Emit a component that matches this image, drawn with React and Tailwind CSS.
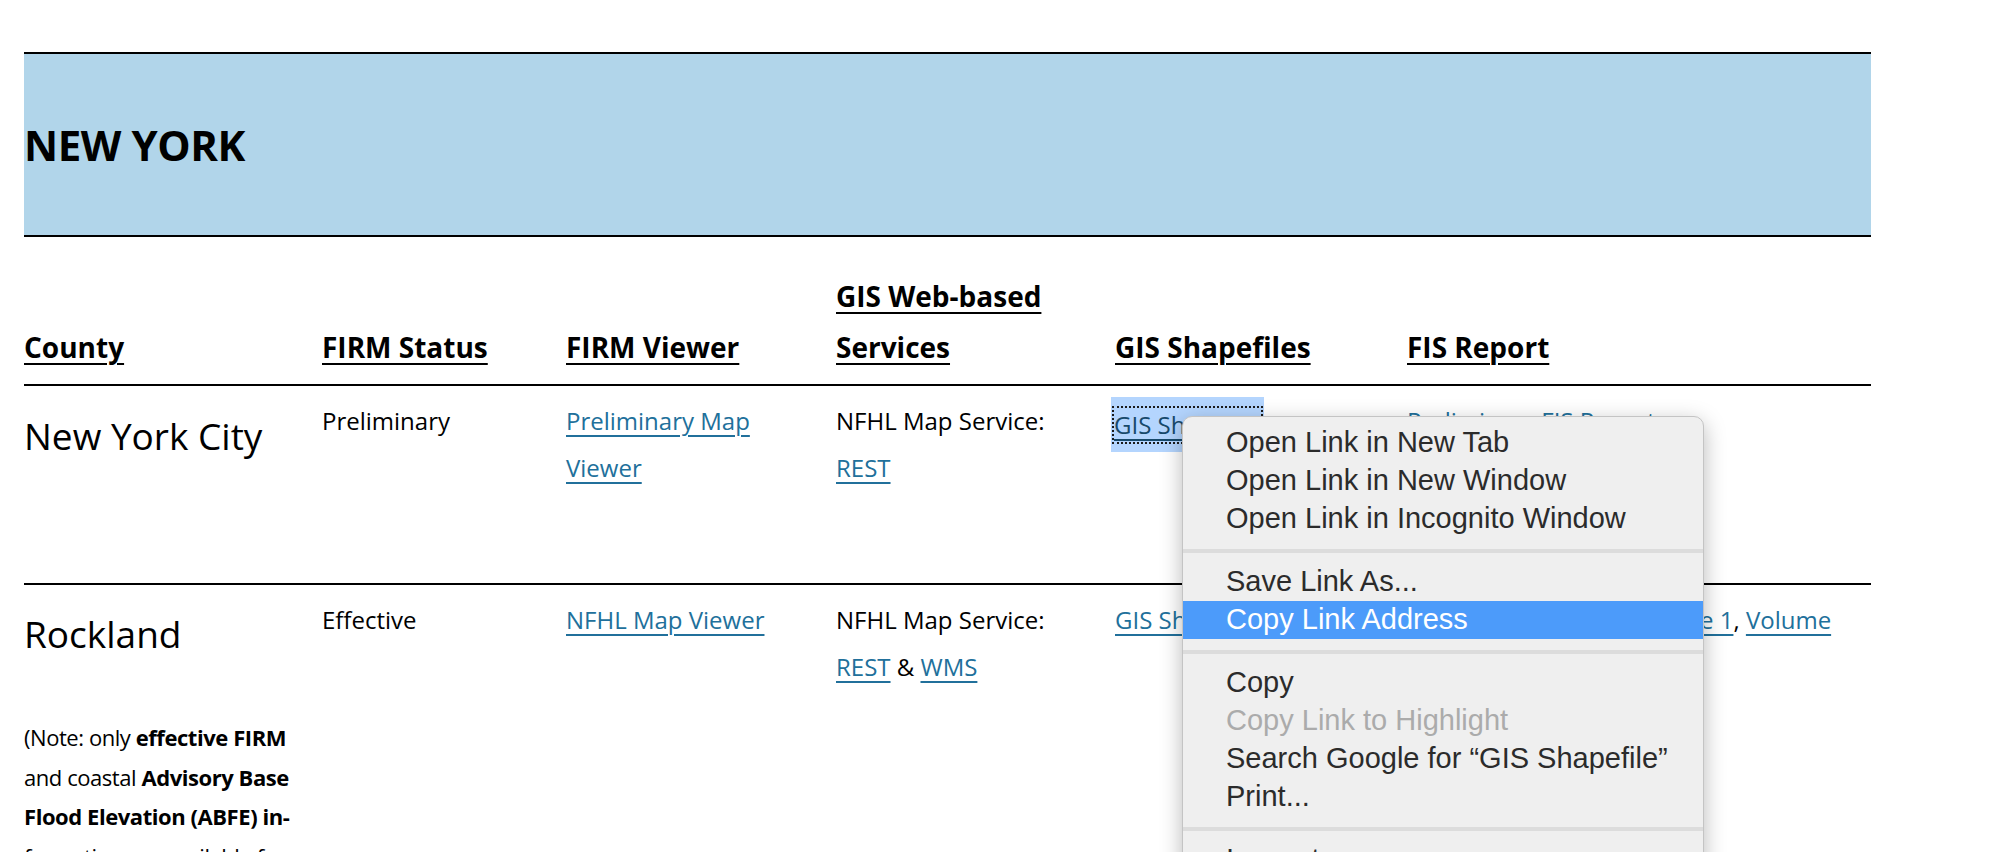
import React from "react";

const link = "text-[#21709b] underline decoration-2 underline-offset-[5px]";
const cols = "grid grid-cols-[298px_244px_270px_279px_292px_464px]";

const menuItems = [
  { label: "Open Link in New Tab" },
  { label: "Open Link in New Window" },
  { label: "Open Link in Incognito Window" },
  { sep: true },
  { label: "Save Link As..." },
  { label: "Copy Link Address", active: true },
  { sep: true },
  { label: "Copy" },
  { label: "Copy Link to Highlight", disabled: true },
  { label: "Search Google for \u201cGIS Shapefile\u201d" },
  { label: "Print..." },
  { sep: true },
  { label: "Inspect" },
];

function ContextMenu() {
  return (
    <div className="absolute left-[1182px] top-[416px] w-[522px] h-[480px] bg-[#efefef] rounded-t-[10px] border border-[#c4c4c4] shadow-[0_6px_22px_rgba(0,0,0,0.28)] pt-[7px] z-20 font-['Liberation_Sans',Arial,sans-serif]">
      {menuItems.map((item, i) => {
        if (item.sep) {
          return <div key={i} className="h-[4px] my-[10.5px] bg-[#dcdcdc]" />;
        }
        let cls = "text-[#2b2b2b]";
        if (item.active) cls = "bg-[#4c9bfa] text-white";
        if (item.disabled) cls = "text-[#ababab]";
        return (
          <div key={i} className={`h-[38px] flex items-center pl-[43px] text-[29px] ${cls}`}>
            {item.label}
          </div>
        );
      })}
    </div>
  );
}

function HeaderCell({ children }) {
  return <div className="text-[28px] font-bold leading-[51px] underline decoration-2 underline-offset-[5px]">{children}</div>;
}

export default function App() {
  return (
    <div className="relative h-[852px] w-[1996px] overflow-hidden bg-white text-black font-['Open_Sans','Noto_Sans',sans-serif]">
      <div className="pt-[52px] pl-[24px] w-[1871px]">
        <div className="h-[185px] border-y-2 border-black bg-[#b1d5ea] flex items-center">
          <h1 className="text-[42px] font-bold tracking-[-0.01em]">NEW YORK</h1>
        </div>

        <div className={`${cols} items-end pt-[34px] pb-[11px] border-b-2 border-black`}>
          <HeaderCell>County</HeaderCell>
          <HeaderCell>FIRM Status</HeaderCell>
          <HeaderCell>FIRM Viewer</HeaderCell>
          <HeaderCell>GIS Web-based<br />Services</HeaderCell>
          <HeaderCell>GIS Shapefiles</HeaderCell>
          <HeaderCell>FIS Report</HeaderCell>
        </div>

        <div className={`${cols} items-start h-[199px] pt-[11px] border-b-2 border-black text-[24px] leading-[47px]`}>
          <div className="text-[37px] leading-[77px]">New York City</div>
          <div>Preliminary</div>
          <div><a className={link}>Preliminary Map</a><br /><a className={link}>Viewer</a></div>
          <div>NFHL Map Service:<br /><a className={link}>REST</a></div>
          <div>
            <span className="inline-block bg-[#b4d5fe] px-[3px] py-[4px] -ml-[4px]">
              <span className="outline-2 outline-dotted outline-[#1b1b1b] text-[#17496b] underline decoration-2 underline-offset-[5px] leading-[34px] inline-block">GIS Shapefile</span>
            </span>
          </div>
          <div><a className={link}>Preliminary FIS Report</a></div>
        </div>

        <div className={`${cols} items-start pt-[11px] text-[24px] leading-[47px]`}>
          <div>
            <div className="text-[37px] leading-[76px]">Rockland</div>
            <p className="mt-[46px] text-[22px] leading-[39.5px] tracking-[-0.02em] pr-2">
              (Note: only <b>effective FIRM</b> and coastal <b>Advisory Base Flood Elevation (ABFE) in-</b>formation are available for this county)
            </p>
          </div>
          <div>Effective</div>
          <div><a className={link}>NFHL Map Viewer</a></div>
          <div>NFHL Map Service:<br /><a className={link}>REST</a> &amp; <a className={link}>WMS</a></div>
          <div><a className={link}>GIS Shapefile</a></div>
          <div>
            <a className={link}>Effective FIS Report Volume 1</a>, <a className={link}>Volume</a><br />
            <a className={link}>2</a>
          </div>
        </div>
      </div>

      <ContextMenu />
    </div>
  );
}
